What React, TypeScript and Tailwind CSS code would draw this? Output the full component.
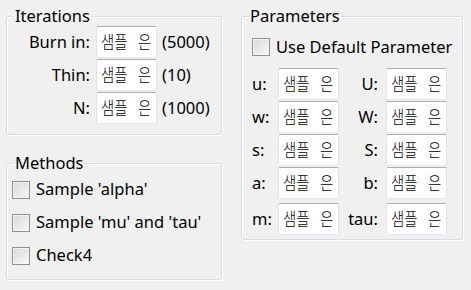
import type { ReactNode } from 'react';

const font = { fontFamily: '"Noto Sans", "Noto Sans CJK KR", sans-serif' };

const GroupBox = ({ title, className, children }: { title: string; className?: string; children: ReactNode }) => (
  <fieldset
    className={`rounded-[3px] border border-[#d5dfe5] shadow-[inset_1px_1px_0_#ffffff,1px_1px_0_#ffffff] ${className ?? ''}`}
  >
    <legend className="ml-[7px] px-[1px] text-[16.5px] leading-[20px] text-black">{title}</legend>
    {children}
  </fieldset>
);

// the sample value is drawn narrow and tall, like the Korean fallback face in the original
const TextBox = () => (
  <div className="flex h-[32px] w-[61px] shrink-0 items-center overflow-hidden whitespace-nowrap rounded-[2px] border border-[#e2e3ea] border-t-[#abadb3] border-b-[#e3e9ef] bg-white pl-[4px] text-black">
    <span className="inline-flex origin-left scale-x-[0.8] text-[18px] font-light leading-[30px]">
      <span>샘플</span>
      <span className="inline-block w-[13px] shrink-0" />
      <span>은</span>
    </span>
  </div>
);

const CheckBox = () => (
  <span className="block h-[18px] w-[18px] shrink-0 border border-[#8f8f8f] bg-gradient-to-br from-[#d9d9d9] to-[#f8f8f8] shadow-[inset_0_0_0_1px_#f4f4f4]" />
);

const iterations = [
  { label: 'Burn in:', hint: '(5000)' },
  { label: 'Thin:', hint: '(10)' },
  { label: 'N:', hint: '(1000)' }
];

const methods = ["Sample 'alpha'", "Sample 'mu' and 'tau'", 'Check4'];

const params = [
  ['u:', 'U:'],
  ['w:', 'W:'],
  ['s:', 'S:'],
  ['a:', 'b:'],
  ['m:', 'tau:']
];

export default function App() {
  return (
    <div className="flex h-[290px] w-[471px] gap-[19px] bg-[#f0f0f0] pt-[6px] pl-[6px] text-[16.5px] text-black" style={font}>
      <div className="flex w-[216px] flex-col gap-[18px]">
        <GroupBox title="Iterations" className="pb-[10px]">
          <div className="flex flex-col gap-[1px]">
            {iterations.map((row) => (
              <div key={row.label} className="flex items-center">
                <span className="w-[83px] text-right">{row.label}</span>
                <span className="ml-[6px]">
                  <TextBox />
                </span>
                <span className="ml-[5px]">{row.hint}</span>
              </div>
            ))}
          </div>
        </GroupBox>

        <GroupBox title="Methods" className="pb-[7px]">
          <div className="flex flex-col pl-[5px]">
            {methods.map((m) => (
              <div key={m} className="flex h-[33px] items-center gap-[6px]">
                <CheckBox />
                <span>{m}</span>
              </div>
            ))}
          </div>
        </GroupBox>
      </div>

      <div className="w-[222px]">
        <GroupBox title="Parameters" className="pb-[4px]">
          <div className="flex h-[42px] items-center gap-[6px] pl-[10px]">
            <CheckBox />
            <span>Use Default Parameter</span>
          </div>
          <div className="flex flex-col gap-[1px]">
            {params.map(([a, b], i) => (
              <div key={a} className={`flex items-center ${i === params.length - 1 ? 'mt-[3px]' : ''}`}>
                <span className="ml-[10px] w-[26px]">{a}</span>
                <TextBox />
                <span className="w-[47px] pr-[8px] text-right">{b}</span>
                <TextBox />
              </div>
            ))}
          </div>
        </GroupBox>
      </div>
    </div>
  );
}
